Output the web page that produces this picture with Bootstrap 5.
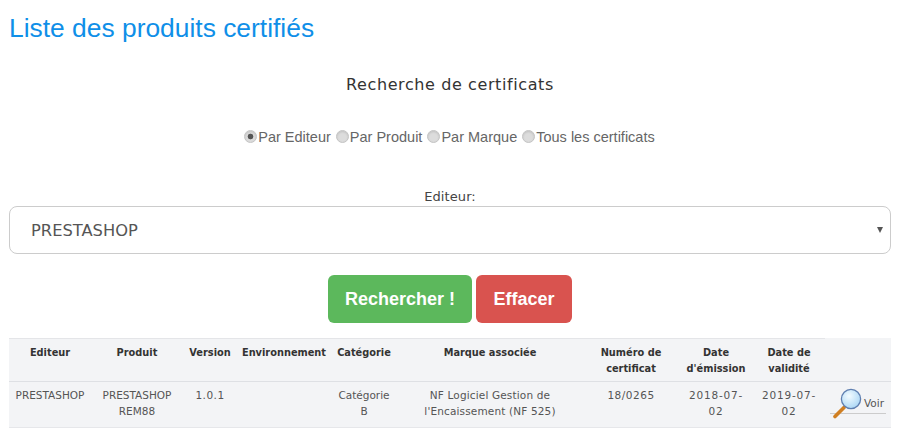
<!DOCTYPE html>
<html lang="fr">
<head>
<meta charset="utf-8">
<title>Liste des produits certifiés</title>
<link href="https://cdn.jsdelivr.net/npm/bootstrap@5.3.0/dist/css/bootstrap.min.css" rel="stylesheet">
<style>
body{background:#fff;font-family:"DejaVu Sans",sans-serif;color:#444;overflow:hidden}
.page-wrap{padding:0 13px 0 9px}
.page-title{font-family:"Liberation Sans",sans-serif;font-size:26.4px;line-height:30px;color:#0f8fe8;font-weight:400;margin:13px 0 0;}
.search-title{font-size:16px;letter-spacing:.6px;line-height:20px;color:#333;margin:32px 0 0;font-weight:400;text-align:center}
.radio-row{font-family:"Liberation Sans",sans-serif;font-size:14.5px;line-height:20px;color:#666;margin-top:32px;padding-right:2px;text-align:center}
.radio-row input{appearance:none;width:13px;height:13px;border-radius:50%;border:1px solid #c4c4c4;background:#dcdcdc;margin:0 1px 0 1px;vertical-align:-1px;box-shadow:inset 0 1px 2px rgba(0,0,0,.12)}
.radio-row input:checked{background:radial-gradient(circle,#555 0,#555 2.5px,#dcdcdc 3.2px)}
.field-label{font-size:13px;letter-spacing:.1px;line-height:16px;color:#444;text-align:center;margin:42px 0 1px}
.product-select{height:48px;border:1px solid #ccc;border-radius:8px;font-size:16.3px;color:#555;padding:3px 21px 0;font-family:"DejaVu Sans",sans-serif;display:flex;align-items:center;justify-content:space-between}
.select-caret{width:0;height:0;border-left:3.5px solid transparent;border-right:3.5px solid transparent;border-top:6px solid #555;margin-right:-14px;margin-top:-3px}
.action-row{margin-top:21px;gap:4px}
.action-btn{font-family:"Liberation Sans",sans-serif;font-size:18px;font-weight:700;height:48px;border-radius:6px;color:#fff;padding:0;display:flex;align-items:center;justify-content:center;border:0}
.btn-go{width:144px;background:#5cb85c}
.btn-clear{width:96px;background:#d9534f}
.result-table{width:100%;margin:15px 0 0;table-layout:fixed;border-collapse:collapse;font-size:10.5px;line-height:15.5px;color:#555;background:#f3f4f6}
.result-table th{font-weight:700;color:#333;text-align:center;vertical-align:top;padding:6px 2px 4px;border-bottom:1px solid #dee0e4;height:42px;font-size:9.8px;line-height:16px}
.result-table th:not(:last-child){border-top:1px solid #e4e5e8}
.result-table td{text-align:center;vertical-align:top;padding:6px;border-bottom:1px solid #e6e7ea;height:46px}
.result-table td.action-cell{padding:6px 5px}
.result-table td.num-cell{letter-spacing:.5px}
.result-table td.date-cell{letter-spacing:.8px}
.result-table td.brand-cell{letter-spacing:.15px}
.view-link{display:flex;align-items:flex-start;color:#555;text-decoration:none;position:relative;height:30px;margin-top:-1px}
.view-link::after{content:"";position:absolute;left:0;right:0;bottom:3px;height:1px;background:#ccc}
.view-link span{margin-top:9px}
.view-link svg{flex:none;position:relative;z-index:1}
</style>
</head>
<body>
<div class="page-wrap">
  <h1 class="page-title">Liste des produits certifiés</h1>
  <h2 class="search-title">Recherche de certificats</h2>
  <div class="radio-row">
    <input type="radio" name="mode" checked aria-label="Par Editeur">Par Editeur
    <input type="radio" name="mode" aria-label="Par Produit">Par Produit
    <input type="radio" name="mode" aria-label="Par Marque">Par Marque
    <input type="radio" name="mode" aria-label="Tous les certificats">Tous les certificats
  </div>
  <div class="field-label">Editeur:</div>
  <div class="product-select"><span>PRESTASHOP</span><span class="select-caret"></span></div>
  <div class="d-flex justify-content-center action-row">
    <button type="button" class="btn action-btn btn-go">Rechercher !</button>
    <button type="button" class="btn action-btn btn-clear">Effacer</button>
  </div>
  <table class="result-table">
    <colgroup>
      <col style="width:82px"><col style="width:92px"><col style="width:54px"><col style="width:94px"><col style="width:66px"><col style="width:186px"><col style="width:96px"><col style="width:74px"><col style="width:72px"><col>
    </colgroup>
    <thead>
      <tr><th>Editeur</th><th>Produit</th><th>Version</th><th>Environnement</th><th>Catégorie</th><th>Marque associée</th><th>Numéro de certificat</th><th>Date d'émission</th><th>Date de validité</th><th></th></tr>
    </thead>
    <tbody>
      <tr>
        <td>PRESTASHOP</td><td>PRESTASHOP REM88</td><td class="num-cell">1.0.1</td><td></td><td>Catégorie B</td><td class="brand-cell">NF Logiciel Gestion de l'Encaissement (NF 525)</td><td class="num-cell">18/0265</td><td class="date-cell">2018-07-02</td><td class="date-cell">2019-07-02</td>
        <td class="action-cell"><a class="view-link" href="#"><svg width="34" height="32" viewBox="0 0 34 32" aria-hidden="true"><defs><radialGradient id="lens" cx="40%" cy="35%" r="70%"><stop offset="0" stop-color="#f2fbff"/><stop offset="1" stop-color="#a9d6f5"/></radialGradient></defs><path d="M5 29.5 14 20.5" stroke="#d07f22" stroke-width="3.6" stroke-linecap="round"/><circle cx="21" cy="12" r="9.6" fill="url(#lens)" stroke="#5f7fb0" stroke-width="1.3"/></svg><span>Voir</span></a></td>
      </tr>
    </tbody>
  </table>
</div>
</body>
</html>
